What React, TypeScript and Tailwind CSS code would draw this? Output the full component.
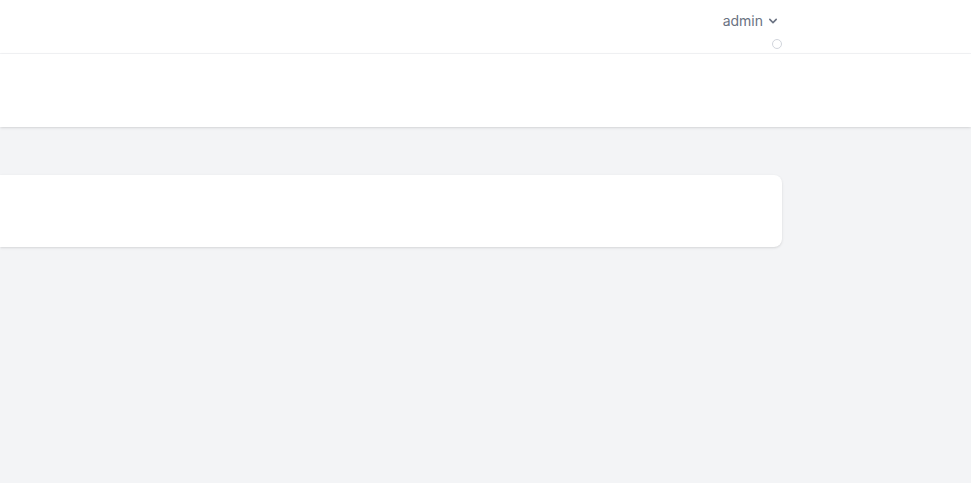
export default function App() {
    return (
        <div className="min-h-screen bg-gray-100" style={{ fontFamily: 'Inter, "DejaVu Sans", sans-serif' }}>
            <nav className="bg-white border-b border-gray-100 h-[54px]">
                <div className="w-[782px] flex justify-end">
                    <div className="flex flex-col items-end">
                        <button className="mt-[11px] mr-[1px] flex items-center h-5 text-sm leading-5 text-gray-500">
                            <span>admin</span>
                            <svg className="ml-[2px] h-4 w-4" viewBox="0 0 20 20" fill="currentColor">
                                <path
                                    fillRule="evenodd"
                                    d="M5.293 7.293a1 1 0 011.414 0L10 10.586l3.293-3.293a1 1 0 111.414 1.414l-4 4a1 1 0 01-1.414 0l-4-4a1 1 0 010-1.414z"
                                    clipRule="evenodd"
                                />
                            </svg>
                        </button>
                        <div className="mt-[8px] w-[10px] h-[10px] rounded-full border border-gray-300"></div>
                    </div>
                </div>
            </nav>

            <header className="bg-white shadow h-[73px]"></header>

            <main className="py-12">
                <div className="w-[782px]">
                    <div className="bg-white shadow-sm rounded-r-lg h-[72px]"></div>
                </div>
            </main>
        </div>
    );
}
